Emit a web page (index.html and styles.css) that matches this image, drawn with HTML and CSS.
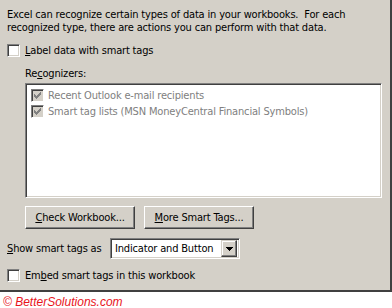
FILE: index.html
```html
<!DOCTYPE html>
<html>
<head>
<meta charset="utf-8">
<link rel="stylesheet" href="styles.css">
</head>
<body>
<div class="panel">
  <p class="intro">Excel can recognize certain types of data in your workbooks.&nbsp; For each<br>recognized type, there are actions you can perform with that data.</p>
  <div class="check top-check"><span class="box"></span><span class="lbl"><u>L</u>abel data with smart tags</span></div>
  <div class="group">
    <div class="grp-label">Re<u>c</u>ognizers:</div>
    <div class="listbox">
      <div class="item"><span class="box disabled"><svg width="7" height="7" viewBox="0 0 7 7" shape-rendering="crispEdges"><polygon points="0,2 1,2 1,3 2,3 2,4 3,4 3,3 4,3 4,2 5,2 5,1 6,1 6,0 7,0 7,3 6,3 6,4 5,4 5,5 4,5 4,6 3,6 3,7 2,7 2,6 1,6 1,5 0,5" fill="#808080"/></svg></span><span>Recent Outlook e-mail recipients</span></div>
      <div class="item"><span class="box disabled"><svg width="7" height="7" viewBox="0 0 7 7" shape-rendering="crispEdges"><polygon points="0,2 1,2 1,3 2,3 2,4 3,4 3,3 4,3 4,2 5,2 5,1 6,1 6,0 7,0 7,3 6,3 6,4 5,4 5,5 4,5 4,6 3,6 3,7 2,7 2,6 1,6 1,5 0,5" fill="#808080"/></svg></span><span>Smart tag lists (MSN MoneyCentral Financial Symbols)</span></div>
    </div>
    <div class="buttons">
      <div class="btn"><u>C</u>heck Workbook...</div>
      <div class="btn"><u>M</u>ore Smart Tags...</div>
    </div>
  </div>
  <div class="show-row">
    <span class="lbl"><u>S</u>how smart tags as</span>
    <div class="select">
      <span class="sel-text">Indicator and Button</span>
      <span class="drop"><svg width="7" height="4" viewBox="0 0 7 4" shape-rendering="crispEdges"><polygon points="0,0 7,0 7,1 6,1 6,2 5,2 5,3 4,3 4,4 3,4 3,3 2,3 2,2 1,2 1,1 0,1" fill="#000"/></svg></span>
    </div>
  </div>
  <div class="check embed-check"><span class="box"></span><span class="lbl">Em<u>b</u>ed smart tags in this workbook</span></div>
</div>
<div class="copyright">© BetterSolutions.com</div>
</body>
</html>
```
FILE: styles.css
```css
* { box-sizing: border-box; }
html, body { margin: 0; padding: 0; background: #fff; }
body {
  font-family: "DejaVu Sans Condensed", "Liberation Sans", sans-serif;
  font-size: 11px;
  letter-spacing: -0.17px;
  color: #000;
  width: 392px;
  height: 308px;
  overflow: hidden;
}
u { text-decoration: underline; text-underline-offset: 1px; }
.panel {
  background: #d4d0c8;
  width: 392px;
  height: 292px;
  border-right: 2px solid #404040;
  border-bottom: 2px solid #404040;
  padding: 8px 0 0 7px;
  display: flex;
  flex-direction: column;
}
.intro {
  margin: 0;
  line-height: 13px;
}
.check {
  display: flex;
  align-items: center;
  gap: 5px;
  height: 13px;
  line-height: 13px;
}
.top-check { margin-top: 10px; }
.box {
  width: 13px;
  height: 13px;
  flex: none;
  border: 1px solid;
  border-color: #808080 #fff #fff #808080;
  box-shadow: inset 1px 1px #404040, inset -1px -1px #d4d0c8;
  background: #fff;
  display: flex;
  align-items: center;
  justify-content: center;
}
.box.disabled { background: #d4d0c8; }
.group {
  margin-left: 18px;
  margin-top: 10px;
  display: flex;
  flex-direction: column;
}
.grp-label { line-height: 13px; height: 13px; }
.listbox {
  margin-top: 3px;
  width: 357px;
  height: 115px;
  background: #fff;
  border: 1px solid;
  border-color: #808080 #fff #fff #808080;
  box-shadow: inset 1px 1px #404040, inset -1px -1px #d4d0c8;
  padding: 3px 0 0 5px;
  color: #808080;
}
.item {
  display: flex;
  align-items: center;
  gap: 4px;
  height: 16px;
}
.buttons {
  margin-top: 8px;
  display: flex;
  gap: 9px;
}
.btn {
  width: 110px;
  height: 23px;
  display: flex;
  align-items: center;
  justify-content: center;
  border: 1px solid;
  border-color: #fff #404040 #404040 #fff;
  box-shadow: inset -1px -1px #808080, inset 1px 1px #d4d0c8;
}
.show-row {
  margin-top: 9px;
  display: flex;
  align-items: center;
  height: 21px;
}
.show-row .lbl { width: 103px; }
.select {
  width: 130px;
  height: 21px;
  background: #fff;
  border: 1px solid;
  border-color: #808080 #fff #fff #808080;
  box-shadow: inset 1px 1px #404040, inset -1px -1px #d4d0c8;
  padding: 2px 2px 2px 4px;
  display: flex;
  align-items: center;
  justify-content: space-between;
}
.drop {
  width: 16px;
  height: 17px;
  background: #d4d0c8;
  border: 1px solid;
  border-color: #d4d0c8 #404040 #404040 #d4d0c8;
  box-shadow: inset -1px -1px #808080, inset 1px 1px #fff;
  display: flex;
  align-items: center;
  justify-content: center;
}
.embed-check { margin-top: 10px; }
.copyright {
  padding: 4px 0 0 3px;
  font-family: "Liberation Sans", Arial, sans-serif;
  font-style: italic;
  font-size: 12px;
  line-height: 12px;
  color: #e8141c;
  letter-spacing: 0;
}
```
